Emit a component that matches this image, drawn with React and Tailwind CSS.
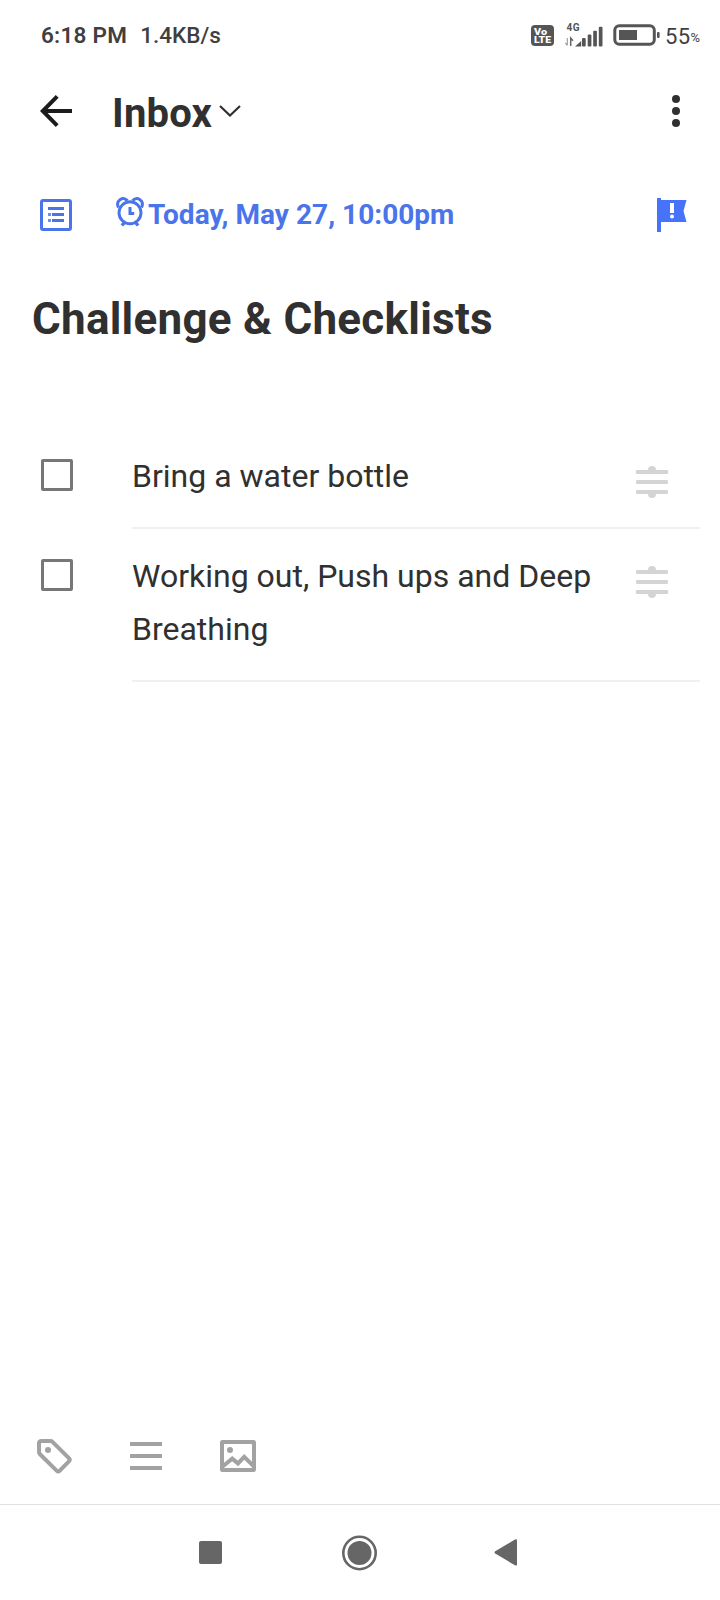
import { useState } from "react";

const initialItems = [
  { id: 1, text: "Bring a water bottle", done: false },
  { id: 2, text: "Working out, Push ups and Deep Breathing", done: false },
];

function SignalIcon() {
  return (
    <svg className="ml-[11px] h-6 w-[38px]" viewBox="0 0 38 24" fill="#555">
      <text x="1.6" y="8" fontSize="10" fontWeight="700" fontFamily="Roboto, sans-serif" letterSpacing="0.3">4G</text>
      <path d="M2.3 15v7M2.3 22.5l-2-2.6" stroke="#999" strokeWidth="1.1" fill="none" />
      <path d="M5.7 23v-8l2.3 2.8" stroke="#666" strokeWidth="1.5" fill="none" />
      <path d="M10 23.5l6.2-5.5v5.5z" />
      <rect x="17" y="15" width="3.7" height="8.5" rx="1" />
      <rect x="22.7" y="11.5" width="3.7" height="12" rx="1" />
      <rect x="28.2" y="7.8" width="3.7" height="15.7" rx="1" />
      <rect x="33.8" y="3.7" width="3.7" height="19.8" rx="1" />
    </svg>
  );
}

function StatusBar() {
  return (
    <div className="flex h-[70px] items-center pl-[41px] pr-5 text-[22.5px] font-medium text-[#3f3f3f]">
      <span className="pt-px font-semibold tracking-[0.25px]">6:18 PM</span>
      <span className="ml-[13px] pt-px">1.4KB/s</span>
      <div className="ml-auto flex items-center">
        <svg className="h-[21px] w-[23px]" viewBox="0 0 23 21" fontFamily="Roboto, sans-serif" fontWeight="900" fontSize="9.5">
          <rect width="23" height="21" rx="4" fill="#555" />
          <text x="3" y="9.6" fill="#fff" textLength="13" lengthAdjust="spacingAndGlyphs">Vo</text>
          <text x="3" y="18.2" fill="#fff" textLength="17" lengthAdjust="spacingAndGlyphs">LTE</text>
        </svg>
        <SignalIcon />
        <svg className="ml-[10px] h-[22px] w-[47px]" viewBox="0 0 47 22">
          <rect x="1.8" y="1.8" width="39.5" height="18.5" rx="4.5" fill="none" stroke="#555" strokeWidth="3" />
          <rect x="6" y="6" width="18" height="10" fill="#555" />
          <rect x="44" y="8" width="2.6" height="6" rx="1" fill="#555" />
        </svg>
        <span className="ml-[5px] pt-0.5 text-[22px] font-normal tracking-[0.4px]">55</span>
        <span className="pt-1.5 text-[13px] font-normal">%</span>
      </div>
    </div>
  );
}

function Header() {
  return (
    <div className="flex h-[82px] items-center pl-10 pr-8 text-[#303030]">
      <svg className="h-8 w-8" viewBox="0 0 32 32" fill="none" stroke="#1c1c1c" strokeWidth="4">
        <path d="M32 16H3M17.2 1.4L2.8 16l14.4 14.6" />
      </svg>
      <h1 className="ml-10 pt-1.5 text-[40px] font-bold leading-none tracking-[0.2px]">Inbox</h1>
      <svg className="ml-[7px] h-3 w-[22px]" viewBox="0 0 22 12" fill="none" stroke="#303030" strokeWidth="2.2">
        <path d="M1 1l10 9.5L21 1" />
      </svg>
      <svg className="ml-auto h-8 w-8" viewBox="0 0 32 32" fill="#303030">
        <circle cx="20" cy="4" r="4" />
        <circle cx="20" cy="16" r="4" />
        <circle cx="20" cy="28" r="4" />
      </svg>
    </div>
  );
}

function DateRow() {
  return (
    <div className="flex h-[126px] items-center pl-10 pr-8 text-[#4a74ea]">
      <svg className="h-8 w-8" viewBox="0 0 32 32">
        <rect x="1.5" y="1.5" width="29" height="29" rx="1.5" fill="none" stroke="currentColor" strokeWidth="3" />
        <path d="M8 9.5h16M12 15.5h12M12 21.5h12" stroke="currentColor" strokeWidth="3" />
        <path d="M8 15.5h3M8 21.5h3" stroke="currentColor" strokeWidth="3" opacity="0.8" />
      </svg>
      <svg className="mb-1.5 ml-11 h-[30px] w-7" viewBox="0 0 28 30" fill="none" stroke="currentColor">
        <circle cx="14" cy="15.8" r="11" strokeWidth="2.9" />
        <path d="M2.5 10.5C-.8 3.5 6.8-1 11.5 3.6M25.5 10.5C28.8 3.5 21.2-1 16.5 3.6" strokeWidth="3" />
        <path d="M14 10v6.5h4.2" strokeWidth="3" />
        <path d="M8.5 25.5l-2.6 3M19.5 25.5l2.6 3" strokeWidth="3.4" />
      </svg>
      <span className="ml-1 text-[28px] font-bold leading-none tracking-[0.03px]">Today, May 27, 10:00pm</span>
      <svg className="ml-auto h-[34px] w-8" viewBox="0 0 32 34">
        <path d="M1 0h4v2h25.5l-3 11 3 11H5v10H1z" fill="#4772fa" />
        <rect x="14" y="5" width="4" height="10" fill="#fff" />
        <circle cx="16" cy="18.5" r="2" fill="#fff" />
      </svg>
    </div>
  );
}

function DragHandle() {
  return (
    <svg className="mt-[37px] h-8 w-8 shrink-0" viewBox="0 0 32 32" fill="#d4d4d4">
      <path d="M12 4a4 4 0 0 1 8 0zM12 28a4 4 0 0 0 8 0z" />
      <rect y="4" width="32" height="4" rx="1" />
      <rect y="14" width="32" height="4" rx="1" />
      <rect y="24" width="32" height="4" rx="1" />
    </svg>
  );
}

function ChecklistItem({ item, onToggle }) {
  return (
    <li className="flex pl-[41px] pr-5">
      <button
        onClick={() => onToggle(item.id)}
        aria-label={item.text}
        className={`mt-[30px] h-8 w-8 shrink-0 rounded-[2px] border-3 border-[#777] ${item.done ? "bg-[#777]" : ""}`}
      />
      <div className="ml-[59px] flex flex-1 items-start justify-between border-b-2 border-[#f0f0f0] pr-8">
        <p className="w-[480px] pt-[21px] pb-6 text-[32px] leading-[53px] text-[#303030]">{item.text}</p>
        <DragHandle />
      </div>
    </li>
  );
}

function Toolbar() {
  return (
    <div className="flex h-24 items-center pl-9 text-[#a2a2a2]">
      <svg className="h-9 w-9" viewBox="0 0 36 36" fill="none" stroke="currentColor" strokeWidth="4">
        <path d="M5.5 3h9q1.2 0 2 .8l16.4 16.3q1.6 1.6 0 3.2L23.8 32.6q-1.6 1.6-3.2 0L3.8 16q-.8-.8-.8-2v-8.5q0-2.5 2.5-2.5z" />
        <circle cx="12" cy="12" r="3" fill="currentColor" stroke="none" />
      </svg>
      <svg className="ml-[58px] h-7 w-8" viewBox="0 0 32 28" fill="currentColor">
        <rect width="32" height="4" rx="0.5" />
        <rect y="12" width="32" height="4" rx="0.5" />
        <rect y="24" width="32" height="4" rx="0.5" />
      </svg>
      <svg className="ml-[58px] h-8 w-9" viewBox="0 0 36 32" fill="none" stroke="currentColor" strokeWidth="4">
        <rect x="2" y="2" width="32" height="28" rx="0.5" />
        <circle cx="10" cy="10" r="3" fill="currentColor" stroke="none" />
        <path d="M2 27l10.2-8.4 5.8 4.8 6.2-6.6L34 26.5" />
      </svg>
    </div>
  );
}

function NavBar() {
  return (
    <div className="flex h-24 items-center border-t border-[#e1e1e1] pl-[199px] text-[#666]">
      <div className="h-[23px] w-[23px] rounded-[2px] bg-[#666]" />
      <svg className="ml-[119px] h-9 w-9" viewBox="0 0 36 36">
        <circle cx="18.5" cy="18" r="16.2" fill="none" stroke="currentColor" strokeWidth="2.6" />
        <circle cx="18.5" cy="18" r="12" fill="currentColor" />
      </svg>
      <svg className="ml-[117px] h-[27px] w-[23px]" viewBox="0 0 23 27" fill="currentColor">
        <path d="M1.2 12.3L21 .6q2-.9 2 1v23.8q0 1.8-2 .9L1.2 14.5q-1.3-1.1 0-2.2z" />
      </svg>
    </div>
  );
}

function App() {
  const [items, setItems] = useState(initialItems);

  const toggleItem = (id) => {
    setItems(items.map((item) => (item.id === id ? { ...item, done: !item.done } : item)));
  };

  return (
    <div className="flex h-[1600px] w-[720px] flex-col bg-white font-['Roboto',sans-serif]">
      <StatusBar />
      <Header />
      <DateRow />
      <h2 className="flex h-20 items-center pt-0.5 pl-8 text-[44px] font-bold leading-none tracking-[0.25px] text-[#303030]">
        Challenge &amp; Checklists
      </h2>
      <ul className="mt-[71px] flex-1">
        {items.map((item) => (
          <ChecklistItem key={item.id} item={item} onToggle={toggleItem} />
        ))}
      </ul>
      <Toolbar />
      <NavBar />
    </div>
  );
}

export default App;
